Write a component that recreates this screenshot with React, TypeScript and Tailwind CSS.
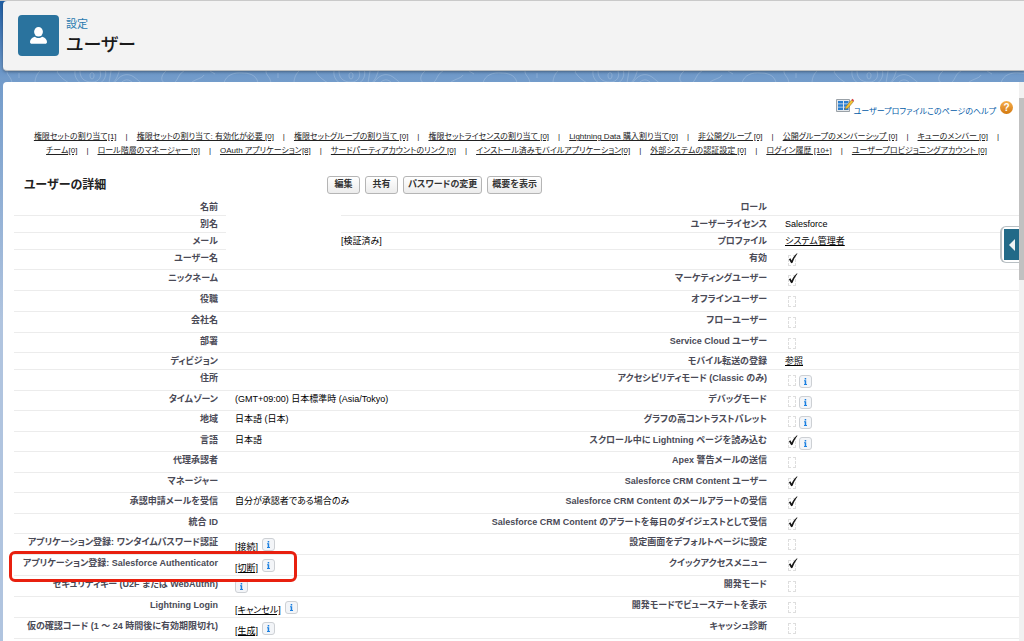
import React from 'react';

type RowSize = 'sm' | 'md' | 'lg';

interface Field {
  label: string;
  value?: string;
  link?: string;
  checked?: boolean;
  info?: boolean;
}

interface Row {
  size: RowSize;
  left: Field;
  right: Field;
  narrow?: boolean;
  marked?: boolean;
}

const rowHeight: Record<RowSize, string> = {
  sm: 'h-[17px]',
  md: 'h-5',
  lg: 'h-[21px]',
};

const relatedLinks = [
  [
    '権限セットの割り当て[1]',
    '権限セットの割り当て: 有効化が必要 [0]',
    '権限セットグループの割り当て [0]',
    '権限セットライセンスの割り当て [0]',
    'Lightning Data 購入割り当て[0]',
    '非公開グループ [0]',
    '公開グループのメンバーシップ [0]',
    'キューのメンバー [0]',
  ],
  [
    'チーム[0]',
    'ロール階層のマネージャー [0]',
    'OAuth アプリケーション[8]',
    'サードパーティアカウントのリンク [0]',
    'インストール済みモバイルアプリケーション[0]',
    '外部システムの認証設定 [0]',
    'ログイン履歴 [10+]',
    'ユーザープロビジョニングアカウント [0]',
  ],
];

const rows: Row[] = [
  { size: 'sm', narrow: true, left: { label: '名前' }, right: { label: 'ロール' } },
  { size: 'sm', narrow: true, left: { label: '別名' }, right: { label: 'ユーザーライセンス', value: 'Salesforce' } },
  { size: 'sm', narrow: true, left: { label: 'メール', value: '[検証済み]' }, right: { label: 'プロファイル', link: 'システム管理者' } },
  { size: 'md', left: { label: 'ユーザー名' }, right: { label: '有効', checked: true } },
  { size: 'lg', left: { label: 'ニックネーム' }, right: { label: 'マーケティングユーザー', checked: true } },
  { size: 'lg', left: { label: '役職' }, right: { label: 'オフラインユーザー', checked: false } },
  { size: 'lg', left: { label: '会社名' }, right: { label: 'フローユーザー', checked: false } },
  { size: 'md', left: { label: '部署' }, right: { label: 'Service Cloud ユーザー', checked: false } },
  { size: 'sm', left: { label: 'ディビジョン' }, right: { label: 'モバイル転送の登録', link: '参照' } },
  { size: 'lg', left: { label: '住所' }, right: { label: 'アクセシビリティモード (Classic のみ)', checked: false, info: true } },
  { size: 'md', left: { label: 'タイムゾーン', value: '(GMT+09:00) 日本標準時 (Asia/Tokyo)' }, right: { label: 'デバッグモード', checked: false, info: true } },
  { size: 'lg', left: { label: '地域', value: '日本語 (日本)' }, right: { label: 'グラフの高コントラストパレット', checked: false, info: true } },
  { size: 'md', left: { label: '言語', value: '日本語' }, right: { label: 'スクロール中に Lightning ページを読み込む', checked: true, info: true } },
  { size: 'lg', left: { label: '代理承認者' }, right: { label: 'Apex 警告メールの送信', checked: false } },
  { size: 'md', left: { label: 'マネージャー' }, right: { label: 'Salesforce CRM Content ユーザー', checked: true } },
  { size: 'lg', left: { label: '承認申請メールを受信', value: '自分が承認者である場合のみ' }, right: { label: 'Salesforce CRM Content のメールアラートの受信', checked: true } },
  { size: 'md', left: { label: '統合 ID' }, right: { label: 'Salesforce CRM Content のアラートを毎日のダイジェストとして受信', checked: true } },
  { size: 'lg', left: { label: 'アプリケーション登録: ワンタイムパスワード認証', link: '[接続]', info: true }, right: { label: '設定画面をデフォルトページに設定', checked: false } },
  { size: 'lg', marked: true, left: { label: 'アプリケーション登録: Salesforce Authenticator', link: '[切断]', info: true }, right: { label: 'クイックアクセスメニュー', checked: true } },
  { size: 'lg', left: { label: 'セキュリティキー (U2F または WebAuthn)', info: true }, right: { label: '開発モード', checked: false } },
  { size: 'lg', left: { label: 'Lightning Login', link: '[キャンセル]', info: true }, right: { label: '開発モードでビューステートを表示', checked: false } },
  { size: 'lg', left: { label: '仮の確認コード (1 ～ 24 時間後に有効期限切れ)', link: '[生成]', info: true }, right: { label: 'キャッシュ診断', checked: false } },
];

const InfoButton: React.FC = () => (
  <button
    type="button"
    aria-label="情報"
    className="flex h-[13px] w-[13px] shrink-0 items-center justify-center rounded-[3px] border border-[#cdd0d4] bg-[#f3f5f8]"
  >
    <svg className="h-[7px] w-[3px]" viewBox="0 0 3 7" fill="#1a7fe0" aria-hidden="true">
      <path d="M.7 0h1.500v1.400H.7zM0 2.300h2.200V6H3v1H0V6h.7V3.200H0z" />
    </svg>
  </button>
);

const Tick: React.FC<{ id: string; checked: boolean }> = ({ id, checked }) => (
  <span className="relative ml-[3px] block h-[11px] w-2">
    <input
      id={id}
      type="checkbox"
      defaultChecked={checked}
      className="peer block h-[11px] w-2 appearance-none border border-dashed border-[#dedede]"
    />
    <svg
      className="pointer-events-none absolute bottom-0.5 left-0 hidden h-[11px] w-2.5 peer-checked:block"
      viewBox="0 0 11 12"
      fill="#151515"
      aria-hidden="true"
    >
      <path d="M1 6.800 2.600 5.800l1.400 2.300C5.600 4.800 7.600 2 9.900.2l.5.5C8.200 3.500 6.200 7 5 10.800L3.500 11.300z" />
    </svg>
  </span>
);

const FieldValue: React.FC<{ id: string; field: Field }> = ({ id, field }) => {
  if (field.checked !== undefined) {
    return (
      <div className="flex h-4 items-start gap-[3px] pt-[5px]">
        <Tick id={id} checked={field.checked} />
        {field.info && <InfoButton />}
      </div>
    );
  }
  if (field.info) {
    return (
      <div className="flex h-4 items-start gap-1 pt-1">
        {field.link && (
          <a href="#" className="pt-0.5 underline">
            {field.link}
          </a>
        )}
        <InfoButton />
      </div>
    );
  }
  return (
    <div className="h-4 pt-px">
      {field.link ? (
        <a href="#" className="underline">
          {field.link}
        </a>
      ) : (
        field.value
      )}
    </div>
  );
};

const FieldLabel: React.FC<{ id: string; field: Field }> = ({ id, field }) => (
  <div className="h-4 pt-px">
    {field.checked !== undefined ? <label htmlFor={id}>{field.label}</label> : field.label}
  </div>
);

// Contour lines behind the page
const Backdrop: React.FC = () => (
  <svg className="absolute inset-0 h-full w-full" aria-hidden="true">
    <defs>
      <pattern id="contours" x="92" y="62" width="259" height="640" patternUnits="userSpaceOnUse">
        <g fill="none" stroke="#a9c3e0" strokeWidth="1" strokeOpacity="0.45">
          <path d="M-2 12c0-3 4-3 4 0s-1 4-2 4-2-1-2-4zM257 12c0-3 4-3 4 0s-1 4-2 4-2-1-2-4z" />
          <path d="M8 8c2 6-1 11-8 11M247 8c0 7 4 11 12 11M13 6c3 9-3 15-12 17M242 8c-1 6 3 13 13 15" />
          <path d="M19 8l-2 12M28 6c-2 5-2 9-8 15M236 6c-5 0-8-2-12 3 3 5 8 9 14 12" />
          <path d="M22 21c5-9 13-12 20-7 4 3 6 5 10 8M28 21c4-5 9-6 14 0" />
          <path d="M74 8c-6 5-6 12 2 13 11 1 8-9 16-13M98 21c4-5 12-5 14-9M132 20c2-8 10-11 19-10 9 0 14 4 15 10M174 8c0 5 4 5 5 12M202 21c0-5 1-9 5-13M118 8l5 3M186 10v5" />
        </g>
      </pattern>
    </defs>
    <rect width="100%" height="100%" fill="url(#contours)" />
  </svg>
);

const PageHeader: React.FC = () => (
  <header className="flex h-[70px] items-start gap-[7px] rounded-l border-b border-[#b9bdc0] bg-[#f3f3f3] pt-3.5 pl-[15px] shadow-[0_1px_3px_rgba(0,0,0,0.35)]">
    <div className="flex h-[41px] w-[41px] items-center justify-center rounded bg-[#2a739e]">
      <svg className="h-[19px] w-[19px]" viewBox="0 0 19 19" fill="#fff" aria-hidden="true">
        <ellipse cx="9.500" cy="5.800" rx="4.400" ry="4.800" />
        <path d="M1 16c0-2.800 2-4.300 4.800-5.300C7 11.600 8 12 9.500 12s2.500-.4 3.700-1.300C16 11.700 18 13.200 18 16c0 1.200-.7 1.800-1.800 1.800H2.800C1.700 17.800 1 17.200 1 16z" />
      </svg>
    </div>
    <div>
      <p className="pt-0.5 text-[11px] leading-[14px] text-[#2a7ab0]">設定</p>
      <h1 className="text-lg leading-7 font-medium text-[#1a1a1a]">ユーザー</h1>
    </div>
  </header>
);

const HelpBar: React.FC = () => (
  <div className="flex h-12 items-start justify-end gap-1 pt-4 pr-1.5">
    <a href="#" className="flex items-start text-[8px] leading-[27px] text-[#015ba7]">
      <svg className="h-[15px] w-[18px]" viewBox="0 0 18 15" aria-hidden="true">
        <path d="M.5 1.500h13v12H.5z" fill="#e4e8ec" stroke="#9aa1a7" />
        <path d="M2 3h5v2.500H2zM8 3h4.500v2.500H8zM2 6.300h5v2.400H2zM8 6.300h4.500v2.400H8zM2 9.500h5V12H2zM8 9.500h4.500V12H8z" fill="#2a7fd0" />
        <path d="M9 11.500l1-3L15.500 2l2 1.500L12 10z" fill="#f6c331" stroke="#7a6423" strokeWidth=".5" />
        <path d="M15.500 2l1-1.200 1.500 1.400-.8 1.400z" fill="#d5343a" />
      </svg>
      ユーザープロファイルこのページのヘルプ
    </a>
    <button
      type="button"
      className="mt-[3px] flex h-[13px] w-[13px] items-center justify-center rounded-full bg-linear-to-b from-[#f7b04a] to-[#d27808] text-[10px] leading-none font-bold text-white"
    >
      ?
    </button>
  </div>
);

const RelatedLinks: React.FC = () => (
  <nav className="flex flex-col items-center text-[8px] leading-[14px] whitespace-nowrap text-[#222]">
    {relatedLinks.map((line, n) => (
      <div key={n} className="flex gap-[9px]">
        {line.map((text, i) => (
          <React.Fragment key={text}>
            <a href="#" className="underline">
              {text}
            </a>
            {(n === 0 || i < line.length - 1) && <span>|</span>}
          </React.Fragment>
        ))}
      </div>
    ))}
  </nav>
);

const buttons = ['編集', '共有', 'パスワードの変更', '概要を表示'];

const DetailTable: React.FC = () => (
  <table className="w-full table-fixed border-separate border-spacing-0 text-[9px] leading-[15px] whitespace-nowrap text-black">
    <colgroup>
      <col className="w-[212px]" />
      <col className="w-[115px]" />
      <col />
      <col className="w-[30%]" />
      <col className="w-[243px]" />
    </colgroup>
    <tbody>
      {rows.map((row, i) => (
        <tr key={row.left.label} className={rowHeight[row.size]}>
          <th className="relative border-b border-[#ececec] pr-2 text-right align-top font-bold text-[#4a4a56]">
            <div className="flex justify-end">
              <FieldLabel id={`l${i}`} field={row.left} />
            </div>
            {row.marked && (
              <span className="pointer-events-none absolute -top-1 -left-[5px] z-10 h-[31px] w-72 rounded-md border-3 border-[#e8200f]" />
            )}
          </th>
          {row.narrow && <td />}
          <td
            colSpan={row.narrow ? 1 : 2}
            className={`border-b border-[#ececec] align-top ${row.narrow ? '' : 'pl-[9px]'}`}
          >
            <FieldValue id={`l${i}`} field={row.left} />
          </td>
          <th className="border-b border-[#ececec] pr-[9px] text-right align-top font-bold text-[#4a4a56]">
            <div className="flex justify-end">
              <FieldLabel id={`r${i}`} field={row.right} />
            </div>
          </th>
          <td className="border-b border-[#ececec] pl-[9px] align-top">
            <FieldValue id={`r${i}`} field={row.right} />
          </td>
        </tr>
      ))}
    </tbody>
  </table>
);

export default function App() {
  return (
    <div
      lang="ja"
      className="relative h-screen overflow-hidden border-t border-[#c9c9c9] bg-linear-to-b from-[#1f5fa5] via-[#729bca] via-12% to-[#b0c4df] to-50% pl-[3px] font-['Liberation_Sans','Noto_Sans_CJK_JP',sans-serif] [font-feature-settings:'palt']"
    >
      <Backdrop />
      <div className="relative flex h-full flex-col gap-[11px]">
        <PageHeader />
        <main className="relative flex min-h-0 flex-1 rounded-tl bg-white">
          <div className="min-w-0 flex-1 overflow-hidden pl-[11px]">
            <HelpBar />
            <RelatedLinks />
            <div className="mt-[17px] mb-1 flex h-5 items-center pl-2.5">
              <h2 className="w-[303px] text-xs font-bold text-[#222]">ユーザーの詳細</h2>
              <div className="flex gap-[5px]">
                {buttons.map((text) => (
                  <button
                    key={text}
                    type="button"
                    className="h-[18px] min-w-[33px] rounded-[3px] border border-[#b5b5b5] bg-linear-to-b from-white to-[#ececec] px-1 text-[9px] font-bold text-[#333]"
                  >
                    {text}
                  </button>
                ))}
              </div>
            </div>
            <DetailTable />
          </div>

          {/* Scrollbar */}
          <div className="w-[5px] bg-[#f1f1f1] pt-4">
            <div className="h-[182px] bg-[#c1c1c1]" />
          </div>

          {/* Help panel tab */}
          <button
            type="button"
            aria-label="パネルを開く"
            className="absolute top-36 right-[5px] flex h-[37px] w-[19px] items-center rounded-l-md border-y border-l-2 border-[#b9c0c4] bg-white pl-0.5"
          >
            <span className="flex h-[31px] w-full items-center justify-center bg-[#226a88]">
              <svg className="h-3 w-1.5" viewBox="0 0 6 12" fill="#eef2f4" aria-hidden="true">
                <path d="M6 0v12L0 6z" />
              </svg>
            </span>
          </button>
        </main>
      </div>
    </div>
  );
}
